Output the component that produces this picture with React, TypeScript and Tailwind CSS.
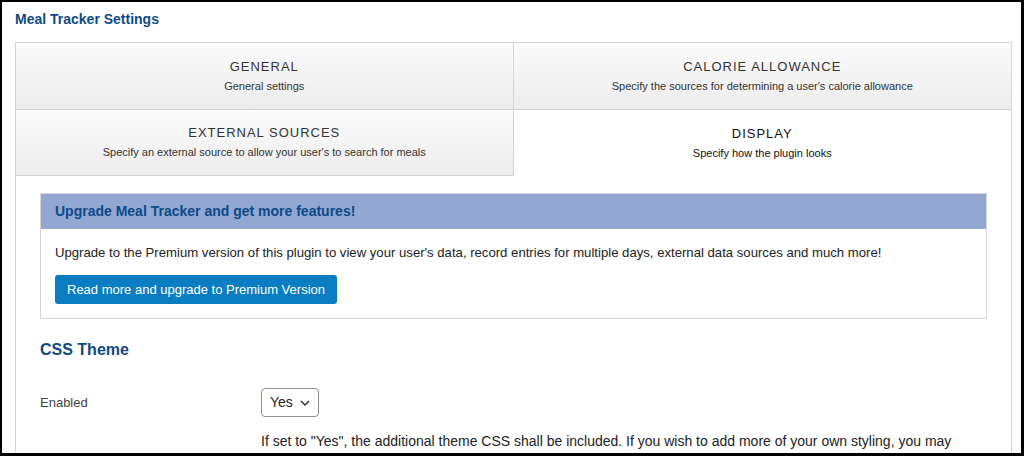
const tabs = [
  { title: 'GENERAL', sub: 'General settings', active: false },
  { title: 'CALORIE ALLOWANCE', sub: "Specify the sources for determining a user's calorie allowance", active: false },
  { title: 'EXTERNAL SOURCES', sub: "Specify an external source to allow your user's to search for meals", active: false },
  { title: 'DISPLAY', sub: 'Specify how the plugin looks', active: true },
];

function Tab({ title, sub, active, right, first }: { title: string; sub: string; active: boolean; right: boolean; first: boolean }) {
  return (
    <div
      className={`${first ? 'h-[67px]' : 'h-[66px]'} flex flex-col items-center justify-center ${
        right ? '' : 'border-r border-[#d4d4d4]'
      } ${
        active
          ? 'bg-white text-[#111]'
          : 'border-b border-[#d4d4d4] bg-gradient-to-b from-[#fbfbfb] via-[#f4f4f4] to-[#ececec] text-[#333]'
      }`}
    >
      <div className="text-[13px] tracking-[1px] leading-4">{title}</div>
      <div className="text-[11px] leading-4 mt-[3px]">{sub}</div>
    </div>
  );
}

export default function App() {
  return (
    <div className="h-[456px] w-[1024px] bg-black pt-[2px] pl-[2px] pr-[3px] pb-[3px] overflow-hidden font-['Liberation_Sans',Arial,sans-serif]">
      <div className="h-full bg-white pl-[13px] pr-[9px] overflow-hidden">
        <h1 className="text-[14px] font-bold text-[#0f4a85] leading-4 pt-[9px] pb-[15px]">Meal Tracker Settings</h1>
        <div className="border-l border-r border-t border-[#d4d4d4] h-[600px]">
          <div className="grid grid-cols-2">
            {tabs.map((t, i) => (
              <Tab key={t.title} title={t.title} sub={t.sub} active={t.active} right={i % 2 === 1} first={i < 2} />
            ))}
          </div>
          <div className="px-[24px] pt-[17px]">
            <div className="border border-[#d6d6d6]">
              <div className="bg-[#92a7d2] h-[35px] flex items-center px-[14px]">
                <span className="text-[14px] font-bold text-[#0d4a89]">Upgrade Meal Tracker and get more features!</span>
              </div>
              <div className="px-[14px] pt-[16px] pb-[14px]">
                <p className="text-[13.15px] text-[#222] leading-4">
                  Upgrade to the Premium version of this plugin to view your user's data, record entries for multiple days, external data sources and much more!
                </p>
                <button className="mt-[14px] h-[29px] px-[12px] rounded-[3px] bg-[#0a7dc2] text-white text-[13px]">
                  Read more and upgrade to Premium Version
                </button>
              </div>
            </div>
            <h2 className="text-[16px] font-bold text-[#0f4a85] mt-[21px] leading-5">CSS Theme</h2>
            <div className="flex mt-[28px]">
              <div className="w-[221px] text-[13px] text-[#444] pt-[5px]">Enabled</div>
              <div className="flex-1">
                <div className="inline-flex items-center gap-[7px] h-[29px] border border-[#8c8f94] rounded-[4px] px-[8px] text-[14px] text-[#222]">
                  Yes
                  <svg width="10" height="6" viewBox="0 0 10 6" fill="none" stroke="#222" strokeWidth="1.3">
                    <path d="M1 1l4 4 4-4" />
                  </svg>
                </div>
                <p className="text-[14px] text-[#222] leading-5 mt-[14px] pr-[10px]">
                  If set to "Yes", the additional theme CSS shall be included. If you wish to add more of your own styling, you may wish to disable the bundled theme.
                </p>
              </div>
            </div>
          </div>
        </div>
      </div>
    </div>
  );
}
